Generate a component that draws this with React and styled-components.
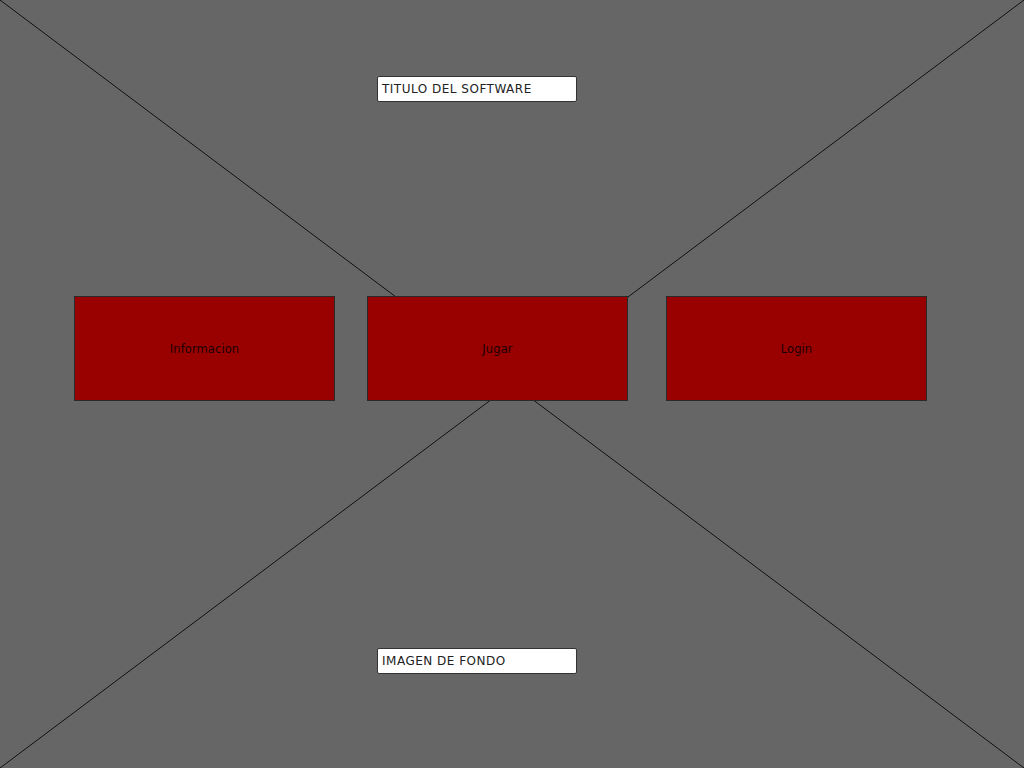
import styled, { createGlobalStyle } from "styled-components";

/*________________________________________________________________________________*/

const GlobalStyle = createGlobalStyle`
  html, body {
    margin: 0;
    padding: 0;
    background: #666666;
  }
  body {
    font-family: "DejaVu Sans", "Liberation Sans", sans-serif;
  }
`;

const buttons = [
  { label: "Informacion", offset: 74 },
  { label: "Jugar", offset: 32 },
  { label: "Login", offset: 38 },
];

const App = () => {
  return (
    <Screen>
      <GlobalStyle />
      <Placeholder viewBox="0 0 1024 768" preserveAspectRatio="none">
        <line x1="0" y1="0" x2="1024" y2="768" />
        <line x1="1024" y1="0" x2="0" y2="768" />
      </Placeholder>
      <Content>
        <Label>TITULO DEL SOFTWARE</Label>
        <ButtonRow>
          {buttons.map((b) => (
            <MenuButton key={b.label} $offset={b.offset}>
              {b.label}
            </MenuButton>
          ))}
        </ButtonRow>
        <Label>IMAGEN DE FONDO</Label>
      </Content>
    </Screen>
  );
};
export default App;

/*________________________________________________________________________________*/

const Screen = styled.div`
  position: relative;
  width: 1024px;
  height: 768px;
  overflow: hidden;
  background: #666666;
`;
/*___________________________________________________*/
const Placeholder = styled.svg`
  position: absolute;
  inset: 0;
  width: 1024px;
  height: 768px;
  line {
    stroke: #111;
    stroke-width: 1;
  }
`;
/*___________________________________________________*/
const Content = styled.div`
  position: relative;
  display: flex;
  flex-direction: column;
  padding-top: 76px;
`;
/*___________________________________________________*/
const Label = styled.div`
  box-sizing: border-box;
  width: 200px;
  height: 26px;
  margin-left: 377px;
  padding: 0 4px 1px;
  display: flex;
  align-items: center;
  background: #ffffff;
  border: 1px solid #333;
  border-radius: 2px;
  color: #222;
  font-size: 12px;
  letter-spacing: 0.5px;
  & + div {
    margin-top: 194px;
  }
`;
/*___________________________________________________*/
const ButtonRow = styled.div`
  display: flex;
  align-items: flex-start;
  margin-bottom: 247px;
`;
/*___________________________________________________*/
const MenuButton = styled.div`
  box-sizing: border-box;
  width: 261px;
  height: 105px;
  margin-left: ${(p) => p.$offset}px;
  display: flex;
  align-items: center;
  justify-content: center;
  background: #990000;
  border: 1px solid #2a2a2a;
  color: #1a0000;
  font-size: 11.5px;
  letter-spacing: 0.1px;
  padding-top: 1px;
`;
/*________________________________________________________________________________*/
